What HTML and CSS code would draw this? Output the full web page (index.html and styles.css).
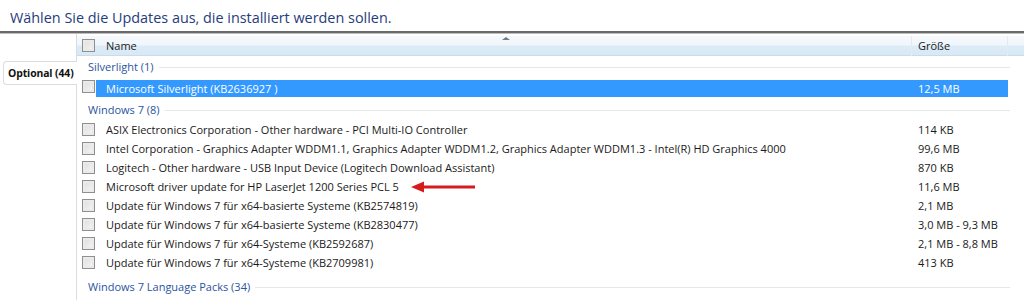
FILE: index.html
```html
<!DOCTYPE html>
<html lang="de">
<head>
    <meta charset="UTF-8">
    <title>Updates auswählen</title>
    <link rel="stylesheet" href="styles.css">
</head>
<body>

<h1 class="title">Wählen Sie die Updates aus, die installiert werden sollen.</h1>
<div class="rule"></div>

<div class="main">
    <div class="sidebar">
        <div class="tab">Optional (44)</div>
    </div>

    <div class="list">
        <div class="head">
            <div class="cell-check"><span class="box"></span></div>
            <div class="cell-name">Name<span class="sort"></span></div>
            <div class="cell-size">Größe</div>
            <div class="cell-end"></div>
        </div>

        <div class="group first"><span>Silverlight (1)</span></div>
        <div class="row selected">
            <div class="cell-check"><span class="box"></span></div>
            <div class="hl">
                <div class="cell-name">Microsoft Silverlight (KB2636927 )</div>
                <div class="cell-size">12,5 MB</div>
            </div>
        </div>

        <div class="group"><span>Windows 7 (8)</span></div>
        <div class="row">
            <div class="cell-check"><span class="box"></span></div>
            <div class="cell-name">ASIX Electronics Corporation - Other hardware - PCI Multi-IO Controller</div>
            <div class="cell-size">114 KB</div>
        </div>
        <div class="row">
            <div class="cell-check"><span class="box"></span></div>
            <div class="cell-name">Intel Corporation - Graphics Adapter WDDM1.1, Graphics Adapter WDDM1.2, Graphics Adapter WDDM1.3 - Intel(R) HD Graphics 4000</div>
            <div class="cell-size">99,6 MB</div>
        </div>
        <div class="row">
            <div class="cell-check"><span class="box"></span></div>
            <div class="cell-name">Logitech - Other hardware - USB Input Device (Logitech Download Assistant)</div>
            <div class="cell-size">870 KB</div>
        </div>
        <div class="row">
            <div class="cell-check"><span class="box"></span></div>
            <div class="cell-name">Microsoft driver update for HP LaserJet 1200 Series PCL 5
                <svg class="arrow" width="66" height="12" viewBox="0 0 66 12">
                    <path d="M12 6 H65" stroke="#d51c1c" stroke-width="3"/>
                    <path d="M1 6 L14 0.5 L14 11.5 Z" fill="#d51c1c"/>
                </svg>
            </div>
            <div class="cell-size">11,6 MB</div>
        </div>
        <div class="row">
            <div class="cell-check"><span class="box"></span></div>
            <div class="cell-name">Update für Windows 7 für x64-basierte Systeme (KB2574819)</div>
            <div class="cell-size">2,1 MB</div>
        </div>
        <div class="row">
            <div class="cell-check"><span class="box"></span></div>
            <div class="cell-name">Update für Windows 7 für x64-basierte Systeme (KB2830477)</div>
            <div class="cell-size">3,0 MB - 9,3 MB</div>
        </div>
        <div class="row">
            <div class="cell-check"><span class="box"></span></div>
            <div class="cell-name">Update für Windows 7 für x64-Systeme (KB2592687)</div>
            <div class="cell-size">2,1 MB - 8,8 MB</div>
        </div>
        <div class="row">
            <div class="cell-check"><span class="box"></span></div>
            <div class="cell-name">Update für Windows 7 für x64-Systeme (KB2709981)</div>
            <div class="cell-size">413 KB</div>
        </div>

        <div class="group last"><span>Windows 7 Language Packs (34)</span></div>
    </div>
</div>

</body>
</html>
```

FILE: styles.css
```css
* {
    box-sizing: border-box;
    margin: 0;
    padding: 0;
}
body {
    background: #fff;
    font-family: 'Open Sans', 'Noto Sans', sans-serif;
    font-size: 11px;
    color: #1a1a1a;
    width: 1024px;
    height: 300px;
    overflow: hidden;
}
.title {
    font-weight: normal;
    font-size: 14.4px;
    color: #1f3d7d;
    height: 31px;
    line-height: 36px;
    padding-left: 10px;
    white-space: nowrap;
}
.rule {
    height: 3px;
    background: #6a6a6a;
    border-bottom: 1px solid #bdbdbd;
}
.main {
    display: flex;
    height: 270px;
}
.sidebar {
    width: 77px;
    padding-top: 27px;
    border-right: 1px solid #d9dde2;
}
.tab {
    position: relative;
    left: 1px;
    height: 24px;
    margin-left: 2px;
    padding-left: 4px;
    line-height: 23px;
    font-weight: bold;
    font-size: 10.4px;
    letter-spacing: -0.1px;
    color: #111;
    background: #fff;
    border: 1px solid #d9dde2;
    border-right: none;
    border-radius: 4px 0 0 4px;
    white-space: nowrap;
}
.list {
    flex: 1;
    display: flex;
    flex-direction: column;
    padding-top: 2px;
}
.head {
    display: flex;
    height: 20px;
    align-items: center;
    background: linear-gradient(#f6f9fc 0%, #f0f6fb 45%, #dbebf7 55%, #d8e9f6 100%);
    border-bottom: 1px solid #c9dcea;
}
.cell-check {
    width: 29px;
    flex: none;
    display: flex;
    align-items: center;
    padding-left: 5px;
}
.box {
    display: block;
    width: 13px;
    height: 13px;
    border: 1px solid #8f8f8f;
    background: linear-gradient(135deg, #dcdcdc, #f7f7f7);
    box-shadow: inset 0 0 0 2px #eaeaea;
}
.cell-name {
    flex: none;
    width: 806px;
    white-space: nowrap;
    overflow: hidden;
    position: relative;
}
.head .cell-name {
    height: 20px;
    line-height: 20px;
    border-right: 1px solid #e3ebf2;
}
.sort {
    position: absolute;
    left: 396px;
    top: 1px;
    width: 0;
    height: 0;
    border-left: 4px solid transparent;
    border-right: 4px solid transparent;
    border-bottom: 3px solid #6f7b86;
}
.cell-size {
    flex: none;
    width: 96px;
    padding-left: 6px;
    white-space: nowrap;
}
.head .cell-size {
    height: 20px;
    line-height: 20px;
    border-right: 1px solid #e3ebf2;
}
.cell-end {
    flex: 1;
}
.group {
    display: flex;
    align-items: center;
    height: 21px;
    padding-left: 11px;
    padding-right: 14px;
    color: #2a54a0;
    font-size: 11px;
}
.group::after {
    content: "";
    flex: 1;
    height: 1px;
    margin-left: 5px;
    margin-top: 2px;
    background: #e4e8ec;
}
.group.first {
    height: 20px;
}
.group.last {
    height: 25px;
    padding-top: 4px;
}
.row {
    display: flex;
    align-items: center;
    height: 19px;
}
.row.selected {
    height: 23px;
    align-items: flex-start;
    padding-top: 4px;
}
.hl {
    display: flex;
    align-items: center;
    height: 17px;
    margin-left: -10px;
    padding-left: 10px;
    background: #3399ff;
    color: #fff;
    width: 912px;
}
.arrow {
    vertical-align: middle;
    margin-left: 8px;
    margin-top: -2px;
}
```
